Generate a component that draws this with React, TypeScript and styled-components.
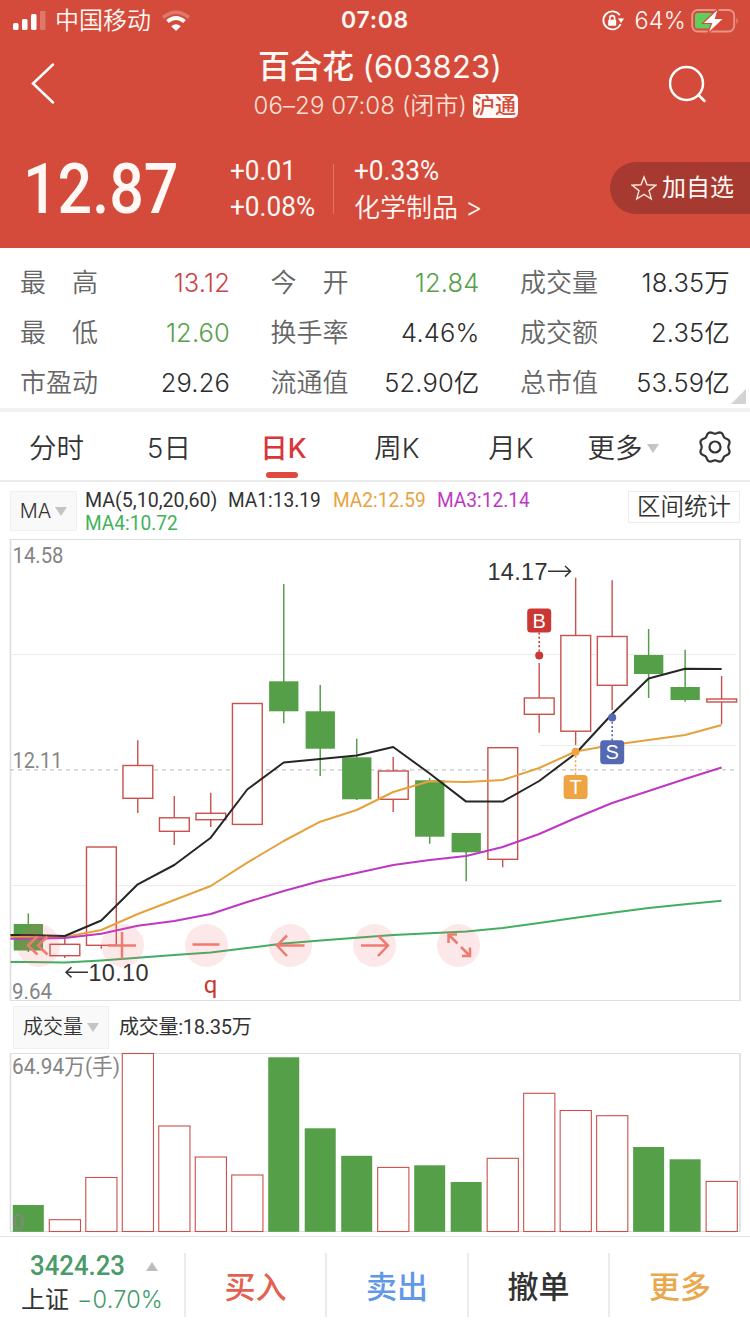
import React from "react";
import styled, { createGlobalStyle } from "styled-components";

const RED = "#d44b3b";
const UP = "#c9504c";
const DOWN = "#559f48";
const SANS = `Inter, "Noto Sans CJK SC", sans-serif`;
const DIN = `Roboto, "Noto Sans CJK SC", sans-serif`;

const Global = createGlobalStyle`
  * { box-sizing: border-box; }
  body { margin: 0; background: #fff; font-family: ${SANS}; color: #333; line-height: 1.2; }
  button { font: inherit; color: inherit; border: 0; padding: 0; background: none; }
`;

const Page = styled.main`
  width: 750px;
  height: 1334px;
  display: flex;
  flex-direction: column;
  background: #fff;
  overflow: hidden;
  white-space: nowrap;
`;

/* Text squeezed or stretched horizontally to get a DIN-like figure width. */
const Narrow = styled.span<{ $w: number; $s: number; $size: number; $weight?: number; $color?: string }>`
  display: block;
  flex: none;
  width: ${(p) => p.$w}px;
  font-family: ${DIN};
  font-size: ${(p) => p.$size}px;
  font-weight: ${(p) => p.$weight ?? 400};
  color: ${(p) => p.$color ?? "inherit"};
  transform: scaleX(${(p) => p.$s});
  transform-origin: left center;
`;

const Header = styled.header`
  flex: none;
  height: 248px;
  background: ${RED};
  color: #fff8f4;
`;

const StatusBar = styled.div`
  height: 42px;
  padding: 0 11px 0 12px;
  display: grid;
  grid-template-columns: 1fr auto 1fr;
  align-items: center;
`;

const StatusSide = styled.div<{ $end?: boolean }>`
  display: flex;
  align-items: center;
  justify-content: ${(p) => (p.$end ? "flex-end" : "flex-start")};
  font-size: 24px;
  line-height: 30px;
`;

const Carrier = styled.span`
  margin: 0 10px 0 7px;
  font-weight: 350;
`;

const Clock = styled.span`
  font-size: 23px;
  font-weight: 600;
  letter-spacing: 0.7px;
  margin-left: -1px;
`;

const Percent = styled.span`
  margin: 0 5px 0 10px;
  font-size: 23.5px;
  font-weight: 350;
  letter-spacing: 0.2px;
`;

const NavBar = styled.div`
  height: 82px;
  display: grid;
  grid-template-columns: 87px 1fr 81px;
  align-items: center;
`;

const NavButton = styled.button`
  height: 82px;
  display: flex;
  align-items: center;
`;

const TitleBlock = styled.div`
  display: flex;
  flex-direction: column;
  align-items: center;
  padding-left: 4px;
  padding-top: 2px;
`;

const Title = styled.h1`
  margin: 0;
  font-size: 32px;
  line-height: 44px;
  font-weight: 500;
`;

const Code = styled.span`
  font-size: 31px;
  font-weight: 420;
  letter-spacing: 0.2px;
`;

const Subtitle = styled.div`
  display: flex;
  align-items: center;
  gap: 5px;
  height: 34px;
  padding-left: 11px;
  font-size: 24px;
  font-weight: 350;
  color: #fbe0d6;
`;

const When = styled.span`
  width: 214px;
  letter-spacing: 0.1px;
`;

const MarketBadge = styled.span`
  width: 45px;
  height: 24px;
  border-radius: 5px;
  background: #fffaf5;
  color: ${RED};
  font-size: 21px;
  font-weight: 500;
  line-height: 24px;
  text-align: center;
`;

const Quote = styled.section`
  height: 124px;
  padding: 5px 0 0 23px;
  display: flex;
  align-items: center;
`;

const Change = styled.div`
  display: flex;
  flex-direction: column;
  line-height: 36px;
  padding-top: 1px;
`;

const Rule = styled.i`
  width: 1px;
  height: 50px;
  margin: 0 20px 0 15px;
  background: #df7567;
`;

const Sector = styled.span`
  font-size: 26px;
  font-weight: 350;
  height: 36px;
  line-height: 38px;
`;

const AddButton = styled.button`
  margin-left: auto;
  margin-top: -1px;
  width: 140px;
  height: 52px;
  padding-left: 21px;
  border-radius: 26px 0 0 26px;
  background: #a73a30;
  display: flex;
  align-items: center;
  gap: 5px;
  font-size: 24px;
`;

const Stats = styled.section`
  flex: none;
  height: 164px;
  padding: 10px 20px 0 20px;
  display: grid;
  grid-template-columns: 210px 209px 210px;
  column-gap: 40.5px;
  grid-template-rows: repeat(3, 50px);
  border-bottom: 4px solid #f1f1f1;
  position: relative;
`;

const Stat = styled.div`
  display: flex;
  align-items: center;
  justify-content: space-between;
  font-size: 26px;
`;

const StatLabel = styled.span`
  width: 78px;
  display: flex;
  justify-content: space-between;
  color: #666;
  font-weight: 350;
`;

const StatValue = styled.span<{ $tone?: "up" | "down" }>`
  font-size: 25.5px;
  font-weight: 350;
  letter-spacing: 0.15px;
  color: ${(p) => (p.$tone === "up" ? "#cd4246" : p.$tone === "down" ? "#559f48" : "#2c2c2c")};
`;

const Corner = styled.i`
  position: absolute;
  right: 4px;
  bottom: 4px;
  border-left: 15px solid transparent;
  border-bottom: 15px solid #d3d3d3;
`;

const Tabs = styled.nav`
  flex: none;
  height: 70px;
  display: grid;
  grid-template-columns: 113px 112px 117px 110px 118px 106px 74px;
  border-bottom: 2px solid #ebebeb;
`;

const Tab = styled.button<{ $active?: boolean }>`
  display: flex;
  align-items: center;
  justify-content: center;
  font-size: 27.5px;
  position: relative;
  padding-top: 4px;
  color: ${(p) => (p.$active ? "#d8363a" : "#333")};
  font-weight: ${(p) => (p.$active ? 460 : 350)};
  &::after {
    content: "";
    display: ${(p) => (p.$active ? "block" : "none")};
    position: absolute;
    bottom: 2px;
    left: 41px;
    width: 32px;
    height: 6px;
    border-radius: 3px;
    background: #df4a3e;
  }
`;

const Caret = styled.i<{ $up?: boolean }>`
  flex: none;
  border: 6.5px solid transparent;
  border-top: ${(p) => (p.$up ? "0" : "9px solid #c4c4c4")};
  border-bottom: ${(p) => (p.$up ? "9px solid #bdbdbd" : "0")};
`;

const MoreCaret = styled(Caret)`
  margin-left: 4px;
`;

const LegendBar = styled.div`
  flex: none;
  height: 57px;
  padding: 9px 10px 0 10px;
  display: flex;
  align-items: flex-start;
`;

const Picker = styled.button<{ $w: number; $h: number; $size: number }>`
  width: ${(p) => p.$w}px;
  height: ${(p) => p.$h}px;
  border: 1px solid #f0f0f0;
  background: #f9f9f9;
  display: flex;
  align-items: center;
  justify-content: center;
  gap: 4px;
  font-size: ${(p) => p.$size}px;
  font-weight: 350;
`;

const Legend = styled.div`
  margin: -2px 0 0 8px;
  display: grid;
  grid-template-columns: 143px 105px 104px 104px;
  line-height: 23px;
`;

const RangeButton = styled.button`
  margin-left: auto;
  width: 112px;
  height: 32px;
  border: 1px solid #ebebeb;
  font-size: 23.5px;
  font-weight: 350;
`;

const ChartArea = styled.section`
  flex: none;
  height: 464px;
  position: relative;
`;

const ChartTools = styled.div`
  position: absolute;
  left: 17px;
  top: 385px;
  display: flex;
  gap: 41px;
`;

const Tool = styled.button`
  width: 43px;
  height: 43px;
  border-radius: 50%;
  background: rgba(232, 100, 100, 0.15);
`;

const VolumeBar = styled.div`
  flex: none;
  height: 48px;
  padding: 0 13px;
  display: flex;
  align-items: center;
  font-size: 20px;
`;

const VolumeText = styled.div`
  margin-left: 10px;
  font-family: ${DIN};
  font-size: 20px;
  letter-spacing: -0.25px;
`;

const VolumeArea = styled.section`
  flex: none;
  height: 185px;
`;

const Svg = styled.svg`
  display: block;
`;

const Footer = styled.footer`
  flex: none;
  height: 98px;
  border-top: 1px solid #e4e4e4;
  padding-top: 16px;
  display: grid;
  grid-template-columns: 184px 141px 142px 141px 142px;
  grid-template-rows: 64px;
`;

const Index = styled.div`
  padding-left: 21px;
  display: flex;
  flex-direction: column;
  margin-top: -4px;
`;

const IndexRow = styled.div<{ $inset?: number }>`
  height: 37px;
  padding-left: ${(p) => p.$inset ?? 0}px;
  display: flex;
  align-items: center;
  font-size: 24px;
`;

const IndexPercent = styled.span`
  margin-left: 8px;
  font-weight: 350;
  font-size: 23.5px;
  letter-spacing: 0.2px;
  color: #3f9a68;
`;

const Action = styled.button<{ $color: string }>`
  border-left: 2px solid #ebebeb;
  color: ${(p) => p.$color};
  font-size: 31px;
  font-weight: 500;
  padding-top: 4px;
`;

const STEP = 36.49;
const cx = (i: number) => 28.3 + STEP * i;

type Candle = [up: boolean, high: number, top: number, bottom: number, low: number];
const CANDLES: Candle[] = [
  [false, 913.3, 924, 950.5, 952],
  [true, 939, 944.3, 955.7, 958],
  [true, 847, 847, 945.3, 948.7],
  [true, 740.3, 765.5, 798.3, 813],
  [true, 796, 817.8, 831.3, 845],
  [true, 792.7, 813.3, 819.7, 827],
  [true, 703.5, 703.5, 824.4, 824.4],
  [false, 584, 681.3, 711.3, 723.3],
  [false, 685, 711.3, 748.7, 776],
  [false, 738.7, 757.3, 799.3, 800],
  [true, 757, 771, 799.3, 812],
  [false, 778, 780.3, 836.7, 843.7],
  [false, 833, 833, 852.3, 881.3],
  [true, 747.7, 747.7, 859.3, 867.3],
  [true, 663, 698, 714.3, 732.7],
  [true, 577.7, 635.5, 731.2, 745],
  [true, 580.3, 636.5, 685.3, 710],
  [false, 629, 655, 674, 698],
  [false, 649.7, 687, 700, 701.7],
  [true, 676, 699, 702, 724],
];

const VOLUMES = [
  1205, 1219.7, 1177.5, 1053.5, 1126, 1157, 1175, 1057.3, 1128.3, 1155.8,
  1167.4, 1165.3, 1182, 1158.3, 1093.3, 1110.5, 1115.7, 1147, 1159.3, 1181.4,
];

const MA: { color: string; y: number[] }[] = [
  { color: "#42ae62", y: [962, 962.5, 960.5, 957.7, 955, 952.5, 948, 943.5, 940.5, 937.7, 935, 933.3, 931.5, 928, 923, 917.7, 912.7, 908, 904.3, 900.7] },
  { color: "#e5a13b", y: [936.8, 937, 930, 914, 900, 886, 862.7, 841, 821.7, 810, 792, 781.3, 782, 780, 768, 751.5, 745, 740, 735, 725] },
  { color: "#be38c4", y: [938.8, 938, 933.7, 925.7, 921, 914, 902, 891, 881, 873, 865, 860, 856, 847, 834, 818, 803, 791, 779, 767.5] },
  { color: "#262626", y: [935, 936, 920.5, 884.3, 865, 837.7, 789.5, 762.5, 759, 755.5, 747, 773.5, 801.6, 801.6, 781, 753.5, 714, 678.5, 668.8, 669] },
];

function Marker({ x, dot, box, color, text }: { x: number; dot: number; box: number; color: string; text: string }) {
  return (
    <g>
      <line x1={x} x2={x} y1={dot} y2={box} stroke={color} strokeWidth="1.6" strokeDasharray="2 2.2" />
      <circle cx={x} cy={dot} r="4" fill={color} />
      <rect x={x - 12} y={box - 12} width="24" height="24" rx="3.5" fill={color} />
      <text x={x} y={box + 7} textAnchor="middle" fontFamily="Liberation Sans, sans-serif" fontSize="20" fill="#fff">{text}</text>
    </g>
  );
}

function PriceChart() {
  return (
    <Svg width="750" height="464" viewBox="0 539 750 464">
      <g fill="none" stroke="#dedede">
        <path d="M10 539.5H741M10 1000.5H741" />
        <path d="M10.5 539V1001M740 539V1001" strokeWidth="1.6" />
        <path d="M12 654.5H736M540 745.5H736M12 885.5H736" stroke="#ebebeb" />
        <path d="M10 769.8H738" stroke="#c6c6c6" strokeWidth="1.3" strokeDasharray="4 4" />
      </g>
      {CANDLES.map(([up, high, top, bottom, low], i) => {
        const x = cx(i);
        return up ? (
          <g key={i} stroke={UP} strokeWidth="1.4" fill="#fff">
            <path d={`M${x} ${high}V${top}M${x} ${bottom}V${low}`} />
            <rect x={x - 14.8} y={top} width="29.8" height={bottom - top} />
          </g>
        ) : (
          <g key={i} fill={DOWN}>
            <path d={`M${x} ${high}V${low}`} stroke={DOWN} strokeWidth="1.5" />
            <rect x={x - 14.6} y={top} width="29.3" height={bottom - top} />
          </g>
        );
      })}
      {MA.map((m) => (
        <polyline
          key={m.color}
          fill="none"
          stroke={m.color}
          strokeWidth="2"
          strokeLinejoin="round"
          points={`10.5,${m.y[0]} ` + m.y.map((y, i) => `${cx(i)},${y}`).join(" ")}
        />
      ))}
      <Marker x={539.2} dot={655.6} box={620.6} color="#cb3834" text="B" />
      <Marker x={575.6} dot={751.8} box={787} color="#eea443" text="T" />
      <Marker x={612.2} dot={717.5} box={752.2} color="#5469b1" text="S" />
      <g fontFamily="Roboto, sans-serif" fontSize="22.5" fill="#858585">
        <text x="12.5" y="563" textLength="51" lengthAdjust="spacingAndGlyphs">14.58</text>
        <text x="12.5" y="768" textLength="50" lengthAdjust="spacingAndGlyphs">12.11</text>
        <text x="12" y="998.5" textLength="40" lengthAdjust="spacingAndGlyphs">9.64</text>
      </g>
      <g fontFamily="Liberation Sans, sans-serif" fontSize="23.5" fill="#333">
        <text x="487.5" y="580" textLength="60">14.17</text>
        <text x="88.5" y="981" textLength="60">10.10</text>
      </g>
      <path d="M548 571.3H570M565 566L570.5 571.3L565 576.6M88 972.3H66.5M71.5 967.2L66 972.3L71.5 977.4" fill="none" stroke="#333" strokeWidth="1.5" />
      <text x="210.5" y="993" textAnchor="middle" fontFamily="Roboto, sans-serif" fontSize="24" fill="#c9382f">q</text>
    </Svg>
  );
}

function VolumeChart() {
  return (
    <Svg width="750" height="185" viewBox="0 1051 750 185">
      <g fill="none" stroke="#dedede">
        <path d="M10 1053.5H741M10 1231.5H741" />
        <path d="M10.5 1053V1232M740 1053V1232" strokeWidth="1.6" />
      </g>
      {VOLUMES.map((y, i) =>
        CANDLES[i][0] ? (
          <rect key={i} x={cx(i) - 15.5} y={y} width="31.2" height={1231.5 - y} fill="#fff" stroke={UP} strokeWidth="1.1" />
        ) : (
          <rect key={i} x={cx(i) - 15.5} y={y} width="31" height={1231.8 - y} fill={DOWN} />
        ),
      )}
      <text x="12" y="1074" textLength="108" lengthAdjust="spacingAndGlyphs" fontFamily="Roboto, Noto Sans CJK SC, sans-serif" fontSize="22" fontWeight="400" fill="#858585">
        64.94万(手)
      </text>
      <text x="12" y="1229.5" fontFamily="Roboto, sans-serif" fontSize="22" fontWeight="500" fill="#7c8c7a">0</text>
    </Svg>
  );
}

const TOOL_PATHS = [
  "M20.5 12.5L11 21.5L20.5 30.5M30.5 12.5L21 21.5L30.5 30.5",
  "M7 21.5H35M21 8V35",
  "M7.5 20.5H34.5",
  "M35.5 21.5H8M18 11.5L8 21.5L18 32",
  "M8 21.5H35M25 11.5L35 21.5L25 32",
  "M20.5 19.5L12 11M11.5 19V10.5H20M24 23L32.5 31.5M25 32H33V23.5",
];

const STATS: [string, string, ("up" | "down")?][] = [
  ["最高", "13.12", "up"],
  ["今开", "12.84", "down"],
  ["成交量", "18.35万"],
  ["最低", "12.60", "down"],
  ["换手率", "4.46%"],
  ["成交额", "2.35亿"],
  ["市盈动", "29.26"],
  ["流通值", "52.90亿"],
  ["总市值", "53.59亿"],
];

const TABS = ["分时", "5日", "日K", "周K", "月K"];

function gearPath(c: number) {
  let d = "";
  for (let i = 0; i <= 96; i++) {
    const a = (i / 96) * Math.PI * 2;
    const r = 14.4 + 1.1 * Math.cos(8 * (a + Math.PI / 2) + Math.PI);
    d += `${i ? "L" : "M"}${(c + r * Math.cos(a)).toFixed(2)} ${(c + r * Math.sin(a)).toFixed(2)}`;
  }
  return d + "Z";
}

export default function App() {
  return (
    <Page>
      <Global />
      <Header>
        <StatusBar>
          <StatusSide>
            <Svg width="36" height="20" viewBox="0 0 36 20" fill="#fff">
              <rect x="1" y="12" width="5.5" height="7" rx="1.5" />
              <rect x="10" y="8" width="5.5" height="11" rx="1.5" />
              <rect x="19" y="3" width="5.5" height="16" rx="1.5" />
              <rect x="28" y="-1" width="5.5" height="20" rx="1.5" opacity=".25" />
            </Svg>
            <Carrier>中国移动</Carrier>
            <Svg width="30" height="22" viewBox="0 0 30 22" fill="none" stroke="#fff" strokeWidth="4">
              <path d="M2 7.5Q15-3 28 7.5" opacity=".25" strokeWidth="3.6" />
              <path d="M6.5 11.5Q15 4.5 23.5 11.5" />
              <path d="M10.2 16.2Q15 12.4 19.8 16.2L15 21Z" fill="#fff" stroke="none" />
            </Svg>
          </StatusSide>
          <Clock>07:08</Clock>
          <StatusSide $end>
            <Svg width="22" height="22" viewBox="0 0 22 22" fill="none" stroke="#fff" strokeWidth="1.8">
              <path d="M17.8 5.3A9 9 0 1 0 18.6 14" />
              <path d="M19.2 11V8.5" />
              <path d="M16 8.5H22L19 13Z" fill="#fff" stroke="none" />
              <rect x="6.2" y="9.8" width="8" height="6" rx=".8" fill="#fff" stroke="none" />
              <path d="M7.8 10V8a2.4 2.4 0 0 1 4.8 0V10" strokeWidth="1.6" />
            </Svg>
            <Percent>64%</Percent>
            <Svg width="48" height="26" viewBox="0 0 48 26">
              <rect x="1.2" y="2" width="42" height="21.5" rx="5.5" fill="none" stroke="#e8968b" strokeWidth="1.8" />
              <path d="M45.5 9.5Q48 12.8 45.5 16Z" fill="#e8968b" />
              <rect x="4" y="5" width="18" height="15.5" rx="2.5" fill="#5fce5c" />
              <path d="M27.5 0L11.5 15.5H20.5L16.5 26L33 10.5H24.5Z" fill="#fff" stroke={RED} strokeWidth="1.2" />
            </Svg>
          </StatusSide>
        </StatusBar>
        <NavBar>
          <NavButton aria-label="返回">
            <Svg width="87" height="82" fill="none" stroke="#fff" strokeWidth="2.5" strokeLinecap="round">
              <path d="M53 22.5L33 41.5L53 60.5" />
            </Svg>
          </NavButton>
          <TitleBlock>
            <Title>百合花 <Code>(603823)</Code></Title>
            <Subtitle>
              <When>06–29 07:08 (闭市)</When>
              <MarketBadge>沪通</MarketBadge>
            </Subtitle>
          </TitleBlock>
          <NavButton aria-label="搜索">
            <Svg width="81" height="82" fill="none" stroke="#fff" strokeWidth="2.5" strokeLinecap="round">
              <circle cx="17.5" cy="41.5" r="16.5" />
              <path d="M29.5 53L35.5 59" />
            </Svg>
          </NavButton>
        </NavBar>
        <Quote>
          <Narrow $w={207} $s={0.87} $size={70} $weight={500}>12.87</Narrow>
          <Change>
            <Narrow $w={88} $s={0.935} $size={28}>+0.01</Narrow>
            <Narrow $w={88} $s={0.935} $size={28}>+0.08%</Narrow>
          </Change>
          <Rule />
          <Change>
            <Narrow $w={88} $s={0.935} $size={28}>+0.33%</Narrow>
            <Sector>化学制品 &gt;</Sector>
          </Change>
          <AddButton>
            <Svg width="26" height="26" viewBox="0 0 26 26" fill="none" stroke="#fbe6dc" strokeWidth="1.4">
              <path d="M13 2L16 9.8L24.8 10.2L18 15.6L20.3 24L13 19.3L5.7 24L8 15.6L1.2 10.2L10 9.8Z" />
            </Svg>
            加自选
          </AddButton>
        </Quote>
      </Header>

      <Stats>
        {STATS.map(([label, value, tone]) => (
          <Stat key={label}>
            <StatLabel>{label.split("").map((c) => <span key={c}>{c}</span>)}</StatLabel>
            <StatValue $tone={tone}>{value}</StatValue>
          </Stat>
        ))}
        <Corner />
      </Stats>

      <Tabs>
        {TABS.map((t) => <Tab key={t} $active={t === "日K"}>{t}</Tab>)}
        <Tab>更多<MoreCaret /></Tab>
        <Tab aria-label="设置">
          <Svg width="40" height="36" viewBox="-4 1 40 36" fill="none" stroke="#333" strokeWidth="2.2">
            <path d={gearPath(18)} strokeLinejoin="round" />
            <circle cx="18" cy="18" r="5.5" />
          </Svg>
        </Tab>
      </Tabs>

      <LegendBar>
        <Picker $w={67} $h={40} $size={20}>MA<Caret /></Picker>
        <Legend>
          <Narrow $w={131} $s={0.98} $size={20}>MA(5,10,20,60)</Narrow>
          <Narrow $w={92} $s={0.955} $size={20}>MA1:13.19</Narrow>
          <Narrow $w={92} $s={0.955} $size={20} $color="#e8a33d">MA2:12.59</Narrow>
          <Narrow $w={92} $s={0.955} $size={20} $color="#be38c4">MA3:12.14</Narrow>
          <Narrow $w={92} $s={0.955} $size={20} $color="#42b25c">MA4:10.72</Narrow>
        </Legend>
        <RangeButton>区间统计</RangeButton>
      </LegendBar>

      <ChartArea>
        <PriceChart />
        <ChartTools>
          {TOOL_PATHS.map((d) => (
            <Tool key={d}>
              <Svg width="43" height="43" fill="none" stroke="#ee7b70" strokeWidth="2.5">
                <path d={d} />
              </Svg>
            </Tool>
          ))}
        </ChartTools>
      </ChartArea>

      <VolumeBar>
        <Picker $w={96} $h={43} $size={20}>成交量<Caret /></Picker>
        <VolumeText>成交量:18.35万</VolumeText>
      </VolumeBar>
      <VolumeArea>
        <VolumeChart />
      </VolumeArea>

      <Footer>
        <Index>
          <IndexRow $inset={9}>
            <Narrow $w={116} $s={0.92} $size={28} $weight={500} $color="#4a9a6a">3424.23</Narrow>
            <Caret $up />
          </IndexRow>
          <IndexRow>上证<IndexPercent>−0.70%</IndexPercent></IndexRow>
        </Index>
        <Action $color="#e4604f">买入</Action>
        <Action $color="#6298e8">卖出</Action>
        <Action $color="#333">撤单</Action>
        <Action $color="#e9a84c">更多</Action>
      </Footer>
    </Page>
  );
}
